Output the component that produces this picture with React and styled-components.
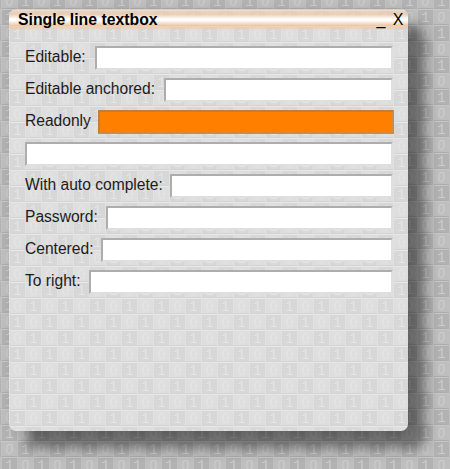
import styled, { createGlobalStyle } from "styled-components";

// one 32x32 repeat of the binary wallpaper: 0 cells lighter, 1 cells darker
const tile = (zero, one, top, bottom, side, digit) =>
  `url("data:image/svg+xml,${encodeURIComponent(`<svg xmlns='http://www.w3.org/2000/svg' width='32' height='32'>
<rect width='16' height='16' fill='${zero}'/>
<rect x='16' y='16' width='16' height='16' fill='${zero}'/>
<rect x='16' width='16' height='16' fill='${one}'/>
<rect y='16' width='16' height='16' fill='${one}'/>
<path d='M0 .5H32M0 16.5H32' stroke='${top}'/>
<path d='M0 15.5H32M0 31.5H32' stroke='${bottom}'/>
<path d='M.5 0V32M16.5 0V32' stroke='${side}'/>
<g fill='${digit}' text-anchor='middle'>
<g font-family='Liberation Sans, sans-serif' font-size='14'>
<text x='8.5' y='13'>0</text><text x='24.5' y='29'>0</text>
</g>
<g font-family='Liberation Mono, monospace' font-size='14'>
<text x='24.5' y='13'>1</text><text x='8.5' y='29'>1</text>
</g>
</g></svg>`)}")`;

const GlobalStyle = createGlobalStyle`
  html, body {
    margin: 0;
    height: 469px;
    overflow: hidden;
  }
  body {
    background-color: #b8b8b8;
    background-image: ${tile("#bebebe", "#b2b2b2", "#c8c8c8", "#acacac", "#c0c0c0", "#cdcdcd")};
    background-position: 1px -7px;
    font-family: "Liberation Sans", Arial, sans-serif;
  }
`;

const Page = styled.div`
  padding: 9px 0 0 9px;
`;

const Window = styled.div`
  width: 399px;
  height: 422px;
  border-radius: 7px;
  background-color: #dcdcdc;
  background-image: ${tile("#dedede", "#d7d7d7", "#e8e8e8", "#d3d3d3", "#e1e1e1", "#e5e5e5")};
  background-position: 0 1px;
  box-shadow: 17px 17px 13px rgba(0, 0, 0, 0.45), 0 0 8px rgba(0, 0, 0, 0.08);
  color: #1c1c1c;
`;

const TitleBar = styled.div`
  display: flex;
  align-items: center;
  height: 21px;
  padding: 0 3px 0 9px;
  border-radius: 7px 7px 0 0;
  background: linear-gradient(
    to bottom,
    rgba(240, 190, 140, 0.15) 0%,
    rgba(245, 195, 150, 0.6) 25%,
    #fff 48%,
    #fff 54%,
    rgba(245, 195, 150, 0.75) 78%,
    rgba(240, 190, 140, 0.1) 100%
  );
`;

const Title = styled.div`
  flex: 1;
  font-size: 15.8px;
  font-weight: bold;
  color: #000;
`;

const WinButton = styled.span`
  width: ${(p) => p.$w}px;
  text-align: center;
  font-size: 16px;
  line-height: 18px;
  color: #000;
`;

const Body = styled.div`
  display: flex;
  flex-direction: column;
  gap: 8px;
  padding: 16px 15px 0 16px;
`;

const Row = styled.div`
  display: flex;
  align-items: center;
  gap: ${(p) => p.$gap ?? 8}px;
  height: 24px;
`;

const Label = styled.label`
  padding-bottom: 3px;
  font-size: 15.6px;
  white-space: nowrap;
`;

const Input = styled.input`
  flex: 1;
  min-width: 0;
  height: 24px;
  box-sizing: border-box;
  padding: 0 3px;
  border: 2px solid;
  border-color: #adadad #dedede #dedede #adadad;
  background: ${(p) => (p.readOnly ? "#ff8000" : "#fff")};
  ${(p) => p.readOnly && "border-color: #bd7f40 #d08a45 #d08a45 #bd7f40; margin-right: -1px;"}
  outline: none;
  font: 14px "Liberation Sans", Arial, sans-serif;
`;

const rows = [
  { label: "Editable:", gap: 9 },
  { label: "Editable anchored:", gap: 9 },
  { label: "Readonly", readOnly: true, gap: 7 },
  {},
  { label: "With auto complete:", gap: 7 },
  { label: "Password:", gap: 8 },
  { label: "Centered:", gap: 8 },
  { label: "To right:", gap: 9 },
];

export default function App() {
  return (
    <Page>
      <GlobalStyle />
      <Window>
        <TitleBar>
          <Title>Single line textbox</Title>
          <WinButton $w={20}>_</WinButton>
          <WinButton $w={14}>X</WinButton>
        </TitleBar>
        <Body>
          {rows.map((r, i) => (
            <Row key={i} $gap={r.gap}>
              {r.label && <Label>{r.label}</Label>}
              <Input readOnly={r.readOnly} defaultValue="" />
            </Row>
          ))}
        </Body>
      </Window>
    </Page>
  );
}
